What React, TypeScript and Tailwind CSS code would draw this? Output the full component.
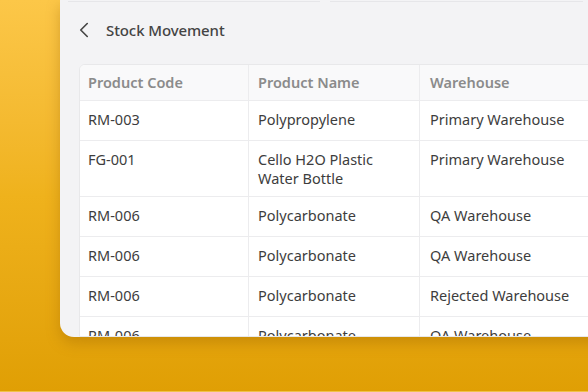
import { ChevronLeft } from 'lucide-react';

interface MovementRow {
  code: string;
  name: string[];
  warehouse: string;
}

const rows: MovementRow[] = [
  { code: 'RM-003', name: ['Polypropylene'], warehouse: 'Primary Warehouse' },
  { code: 'FG-001', name: ['Cello H2O Plastic', 'Water Bottle'], warehouse: 'Primary Warehouse' },
  { code: 'RM-006', name: ['Polycarbonate'], warehouse: 'QA Warehouse' },
  { code: 'RM-006', name: ['Polycarbonate'], warehouse: 'QA Warehouse' },
  { code: 'RM-006', name: ['Polycarbonate'], warehouse: 'Rejected Warehouse' },
  { code: 'RM-006', name: ['Polycarbonate'], warehouse: 'QA Warehouse' },
];

export default function App() {
  return (
    <div
      className="w-[588px] h-[392px] overflow-hidden flex flex-col bg-gradient-to-b from-[#fcc748] via-[#efb21c] to-[#e09f04] border-b border-[#f0c24a]"
      style={{ fontFamily: '"Noto Sans", "Open Sans", sans-serif' }}
    >
      <div className="ml-[60px] w-[560px] h-[337px] shrink-0 bg-[#f3f3f5] rounded-bl-[14px] overflow-hidden shadow-[0_6px_14px_rgba(150,95,0,0.35)] flex flex-col">
        {/* bottom edges of the toolbar boxes above */}
        <div className="flex gap-[10px] ml-[8px] h-[2px]">
          <div className="w-[252px] border-b border-[#e6e6e9]" />
          <div className="w-[253px] border-b border-[#e6e6e9]" />
        </div>

        <div className="flex items-center h-[56px] pl-[11px] text-[#444]">
          <ChevronLeft className="w-[26px] h-[26px]" strokeWidth={1.5} />
          <span className="ml-[9px] text-[15px] font-medium tracking-[-0.1px]">Stock Movement</span>
        </div>

        <div className="ml-[19px] mt-[6px] bg-white border border-[#e8e8ea] rounded-tl-[6px] flex-1 overflow-hidden">
          <div className="grid grid-cols-[169px_171px_1fr] bg-[#f9f9fa] h-[36px] border-b border-[#ececee] text-[14.5px] font-semibold text-[#8b8b8b]">
            <div className="flex items-center pl-[8px] border-r border-[#ececee]">Product Code</div>
            <div className="flex items-center pl-[9px] border-r border-[#ececee]">Product Name</div>
            <div className="flex items-center pl-[10px]">Warehouse</div>
          </div>
          {rows.map((row, i) => (
            <div
              key={i}
              className="grid grid-cols-[169px_171px_1fr] min-h-[40px] border-b border-[#ececee] text-[14.5px] leading-[19px] text-[#3d3d3d]"
            >
              <div className="pl-[8px] pt-[9px] pb-[8px] border-r border-[#ececee]">{row.code}</div>
              <div className="pl-[9px] pt-[9px] pb-[8px] border-r border-[#ececee]">
                {row.name.map((line) => (
                  <div key={line}>{line}</div>
                ))}
              </div>
              <div className="pl-[10px] pt-[9px] pb-[8px]">{row.warehouse}</div>
            </div>
          ))}
        </div>
      </div>
    </div>
  );
}
